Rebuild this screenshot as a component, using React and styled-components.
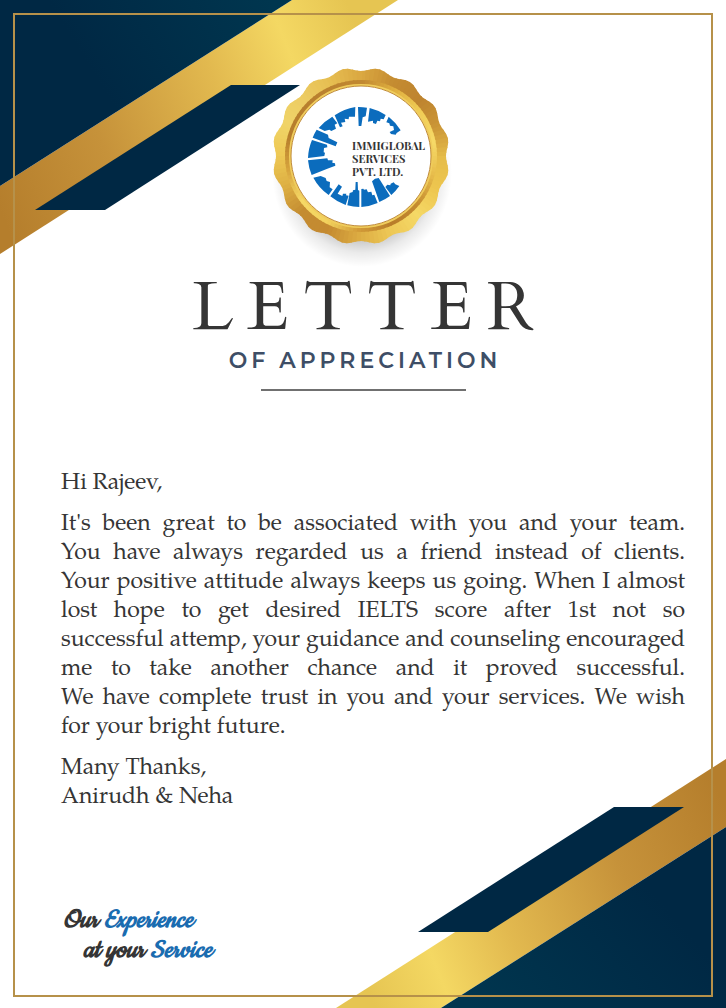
import React from 'react';
import styled, { createGlobalStyle } from 'styled-components';

const GlobalStyle = createGlobalStyle`
  *, *::before, *::after { box-sizing: border-box; }
  body { margin: 0; background: #fff; }
`;

const Page = styled.main`
  position: relative;
  display: flex;
  min-height: 100vh;
  padding: 13px 13px 11px;
  overflow: hidden;
  background: #fff;
  color: #353535;
`;

const Corner = styled.svg`
  position: absolute;
  ${(p) => (p.$end ? 'right: 0; bottom: 0;' : 'left: 0; top: 0;')}
`;

const Frame = styled.article`
  position: relative;
  flex: 1;
  display: flex;
  flex-direction: column;
  padding: 41px 26px 30px 46px;
  border: 2px solid #b6914a;
`;

const Header = styled.header`
  display: flex;
  flex-direction: column;
  align-items: center;
  margin-left: -20px;
`;

const Medal = styled.div`
  display: grid;
  width: 200px;
  height: 214px;

  > * { grid-area: 1 / 1; }
`;

const Company = styled.p`
  position: relative;
  margin: 0;
  padding: 83px 0 0 89px;
  font: 700 11px/13px "Playfair Display", "Liberation Serif", serif;
`;

const Title = styled.h1`
  margin: 0;
  padding-left: 14px;
  font: 400 68px/76px Cardo, "Liberation Serif", serif;
  letter-spacing: 14px;
`;

const Subtitle = styled.p`
  margin: 0;
  padding-left: 4px;
  font: 600 22px/30px Montserrat, Lato, sans-serif;
  letter-spacing: 4px;
  color: #3e4e66;
`;

const Rule = styled.hr`
  width: 205px;
  height: 2px;
  margin: 13px 0 0;
  border: 0;
  background: #707070;
`;

const Letter = styled.section`
  display: flex;
  flex-direction: column;
  gap: 12px;
  margin-top: 78px;
  font: 23px/29px "TeX Gyre Pagella", "Liberation Serif", serif;
`;

const Paragraph = styled.p`
  margin: 0;
`;

const Line = styled.span`
  display: block;
  text-align: justify;
  text-align-last: ${(p) => (p.$last ? 'left' : 'justify')};
`;

const Slogan = styled.footer`
  display: flex;
  flex-direction: column;
  margin-top: auto;
  font: italic 700 29px/30px Cookie, "Liberation Serif", cursive;
`;

const SloganLine = styled.span`
  padding-left: ${(p) => (p.$indent ? 22 : 2)}px;
`;

const Accent = styled.span`
  color: #1a6cb0;
`;

const BODY = [
  "It's been great to be associated with you and your team.",
  'You have always regarded us a friend instead of clients.',
  'Your positive attitude always keeps us going. When I almost',
  'lost hope to get desired IELTS score after 1st not so',
  'successful attemp, your guidance and counseling encouraged',
  'me to take another chance and it proved successful.',
  'We have complete trust in you and your services. We wish',
  'for your bright future.',
];

// Colours round the medal, clockwise from twelve o'clock, evenly spaced.
const OUTER = ['#d9a640', '#c48b31', '#be842f', '#cb9637', '#e6bd4a', '#edc64f', '#f5d866', '#edc856', '#dcac42', '#c48a31', '#c48c31', '#deb043', '#eec955', '#f0d468', '#eccb62', '#e6bd50'];
const BEVEL = ['#c28a32', '#e0b040', '#f0cc55', '#f6da68', '#e8bd4c', '#c58c30', '#b87c2a', '#d29b38', '#f2d25e', '#f6d966', '#d8a53e', '#b77e2c', '#b87f2e', '#bb822f'];

const CX = 98;
const CY = 100;

const polar = (r, a) => `${(CX + r * Math.sin(a)).toFixed(2)},${(CY - r * Math.cos(a)).toFixed(2)}`;

function colorAt(list, t) {
  const pos = t * list.length;
  const i = Math.floor(pos) % list.length;
  const a = parseInt(list[i].slice(1), 16);
  const b = parseInt(list[(i + 1) % list.length].slice(1), 16);
  const f = pos - Math.floor(pos);
  const mix = (s) => Math.round(((a >> s) & 255) * (1 - f) + ((b >> s) & 255) * f);
  return `rgb(${mix(16)},${mix(8)},${mix(0)})`;
}

function Sweep({ colors, clip }) {
  const n = 120;
  const step = (Math.PI * 2) / n;
  return (
    <g clipPath={`url(#${clip})`}>
      {Array.from({ length: n }, (_, i) => (
        <path
          key={i}
          d={`M${CX},${CY} L${polar(96, i * step)} L${polar(96, (i + 1.3) * step)} Z`}
          fill={colorAt(colors, i / n)}
        />
      ))}
    </g>
  );
}

const scallop = `M${Array.from({ length: 240 }, (_, i) => {
  const a = (i / 240) * Math.PI * 2;
  return polar(86.8 - 1.8 * Math.cos(16 * a), a);
}).join(' L')} Z`;

const SKYLINE = [
  'M174,21 A150,150 0 0 1 201,23 L197,49 L188,52 L184,78 L176,78 Z',
  'M209,24 A150,150 0 0 1 257,45 L251,58 L242,56 L240,64 L232,62 L228,72 L219,69 L219,62 L204,65 Z',
  'M266,50 A150,150 0 0 1 302,91 L290,99 L287,104 L273,102 L269,96 L282,90 L280,79 L270,77 L268,70 L259,67 Z',
  'M166,21 A150,150 0 0 0 104,46 L120,82 L128,79 L123,68 L136,66 L134,56 L146,58 L147,50 L165,50 Z',
  'M97,50 A150,150 0 0 0 56,84 L74,93 L88,89 L94,93 L108,86 L104,74 L112,70 Z',
  'M50,89 A150,150 0 0 0 38,113 L107,139 L112,127 L86,114 L84,104 Z',
  'M36,120 A150,150 0 0 0 24,174 L73,168 L75,158 L71,157 L72,144 L82,142 L81,134 Z',
  'M24,181 A150,150 0 0 0 35,225 L82,206 L106,197 L105,190 L97,188 L98,181 L84,181 L82,175 Z',
  'M40,233 A150,150 0 0 0 86,285 L98,268 L89,262 L90,246 L80,243 L77,234 L62,228 Z',
  'M91,289 A150,150 0 0 0 137,315 L146,287 L138,286 L139,281 L129,281 L127,288 L113,281 L126,260 L116,253 Z',
  'M142,316 A150,150 0 0 0 178,321 L178,272 L174,270 L173,246 L167,246 L166,269 L159,271 L158,276 L149,279 Z',
  'M184,321 A150,150 0 0 0 233,309 L223,284 L217,286 L214,275 L204,277 L200,268 L192,269 L190,266 L184,267 Z',
  'M238,306 A150,150 0 0 0 270,288 L242,243 L236,234 L225,236 L216,244 Z',
  'M274,285 A150,150 0 0 0 298,258 L286,253 L281,247 L272,251 L271,256 L262,254 L256,261 Z',
];

function MedalArt() {
  return (
    <svg width="200" height="214" viewBox="0 0 200 214" aria-hidden="true">
      <defs>
        <clipPath id="scallop"><path d={scallop} /></clipPath>
        <clipPath id="bevel"><circle cx={CX} cy={CY} r="76" /></clipPath>
        <radialGradient id="shade">
          <stop offset="0.7" stopColor="#000" stopOpacity="0.22" />
          <stop offset="0.85" stopColor="#000" stopOpacity="0.08" />
          <stop offset="1" stopColor="#000" stopOpacity="0" />
        </radialGradient>
      </defs>
      <ellipse cx={CX + 1} cy="117" rx="90" ry="94" fill="url(#shade)" />
      <Sweep colors={OUTER} clip="scallop" />
      <Sweep colors={BEVEL} clip="bevel" />
      <circle cx={CX} cy={CY} r="71" fill="#fff" stroke="#f0cd5c" strokeWidth="2" />
      <circle cx={CX} cy={CY} r="70" fill="#fff" stroke="#c08a35" strokeWidth="1" />
      <g transform="translate(37 44) scale(0.3333)" fill="#0b6cbd">
        {SKYLINE.map((d) => <path key={d} d={d} />)}
      </g>
    </svg>
  );
}

function Gradients({ id }) {
  const end = id === 'end';
  return (
    <defs>
      <linearGradient id={`gold-${id}`} gradientUnits="userSpaceOnUse" x1={end ? 400 : 0} y1={end ? 60 : 210} x2={end ? 30 : 370} y2={end ? 210 : 60}>
        <stop offset="0" stopColor="#b57e2c" />
        <stop offset="0.3" stopColor="#c6923a" />
        <stop offset="0.62" stopColor="#e2b94f" />
        <stop offset="0.82" stopColor="#f4d863" />
        <stop offset="1" stopColor="#e6c552" />
      </linearGradient>
      <linearGradient id={`navy-${id}`} gradientUnits="userSpaceOnUse" x1={end ? 290 : 110} y1="100" x2={end ? 130 : 270} y2={end ? 240 : 0}>
        <stop offset="0" stopColor="#002844" />
        <stop offset="1" stopColor="#00364f" />
      </linearGradient>
    </defs>
  );
}

export default function App() {
  return (
    <>
      <GlobalStyle />
      <Page>
        <Corner width="400" height="258" viewBox="0 0 400 258" aria-hidden="true">
          <Gradients id="start" />
          <path d="M292,0 H398 L0,254 V186 Z" fill="url(#gold-start)" />
          <path d="M0,0 H292 L0,186 Z" fill="url(#navy-start)" />
          <path d="M231,85 H300 L105,210 H35 Z" fill="#002844" />
        </Corner>
        <Corner $end width="400" height="258" viewBox="0 0 400 258" aria-hidden="true">
          <Gradients id="end" />
          <path d="M400,9 V77 L115,258 H10 Z" fill="url(#gold-end)" />
          <path d="M400,77 V258 H115 Z" fill="url(#navy-end)" />
          <path d="M288,57 H358 L162,182 H92 Z" fill="#002844" />
        </Corner>
        <Frame>
          <Header>
            <Medal>
              <MedalArt />
              <Company>IMMIGLOBAL<br />SERVICES<br />PVT. LTD.</Company>
            </Medal>
            <Title>LETTER</Title>
            <Subtitle>OF APPRECIATION</Subtitle>
            <Rule />
          </Header>
          <Letter>
            <Paragraph>Hi Rajeev,</Paragraph>
            <Paragraph>
              {BODY.map((text, i) => (
                <Line key={text} $last={i === BODY.length - 1}>{text} </Line>
              ))}
            </Paragraph>
            <Paragraph>Many Thanks,<br />Anirudh &amp; Neha</Paragraph>
          </Letter>
          <Slogan>
            <SloganLine>Our <Accent>Experience</Accent></SloganLine>
            <SloganLine $indent>at your <Accent>Service</Accent></SloganLine>
          </Slogan>
        </Frame>
      </Page>
    </>
  );
}
